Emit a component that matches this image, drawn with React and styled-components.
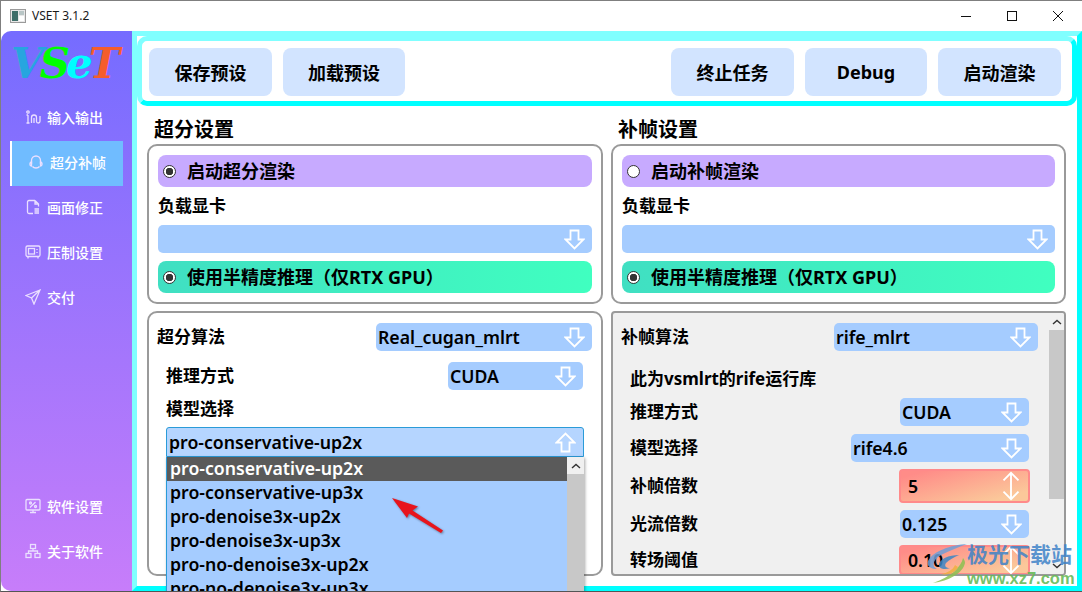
import React from "react";
import styled, { createGlobalStyle } from "styled-components";

const GlobalStyle = createGlobalStyle`
  html, body {
    margin: 0;
    height: 100%;
    overflow: hidden;
    background: #fff;
  }
  * {
    box-sizing: border-box;
  }
`;

const FONT = `"Noto Sans", "Noto Sans CJK SC", sans-serif`;

const ArrowDown = ({ up }) => (
  <ArrowSvg viewBox="0 0 21 21" $up={up}>
    <path d="M6.5 1.5H14.5V10.5H19.5L10.5 19.5L1.5 10.5H6.5Z" fill="none" stroke="#fff" strokeWidth="1.8" />
  </ArrowSvg>
);

const SpinArrows = () => (
  <SpinSvg viewBox="0 0 20 32">
    <path d="M10 2V30M2 10L10 2L18 10M2 22L10 30L18 22" fill="none" stroke="#fff" strokeWidth="2" />
  </SpinSvg>
);

const NavIcon = ({ name }) => {
  const s = { fill: "none", stroke: "#eadfff", strokeWidth: 1.3 };
  return (
    <NavSvg viewBox="0 0 16 16">
      {name === "io" && (
        <>
          <path d="M3 6V14M1.5 14H4.5M1.5 6H3" {...s} />
          <circle cx="3" cy="3" r="1.2" {...s} />
          <path d="M6.5 14V8.5C6.5 7 7.5 6 9 6C10.5 6 11.5 7 11.5 8.5V12.5C11.5 13.5 12.5 14 13.3 14C14.3 14 15 13.3 15 12.3V7M9 14V9" {...s} />
        </>
      )}
      {name === "sr" && (
        <>
          <path d="M3.5 10V6.5C3.5 4 5.5 2 8 2C10.5 2 12.5 4 12.5 6.5V10" {...s} />
          <path d="M2 9.5C2 8.5 2.7 8 3.5 8V12C2.7 12 2 11.5 2 10.5ZM14 9.5C14 8.5 13.3 8 12.5 8V12C13.3 12 14 11.5 14 10.5ZM4.5 12.5C6 14.5 10 14.5 11.5 12.5" {...s} />
        </>
      )}
      {name === "fix" && (
        <>
          <path d="M10 1.5H4C3 1.5 2.5 2 2.5 3V13C2.5 14 3 14.5 4 14.5H8M10 1.5L13.5 5V7.5M10 1.5V5H13.5" {...s} />
          <path d="M9.5 10H14M9.5 12H14M9.5 14H14" {...s} />
        </>
      )}
      {name === "enc" && (
        <>
          <rect x="1" y="2" width="14" height="10.5" rx="1.5" {...s} />
          <rect x="3.5" y="4.5" width="6" height="5.5" {...s} />
          <path d="M12 5V6M12 8V9M3 12.5V14.5M13 12.5V14.5" {...s} />
        </>
      )}
      {name === "send" && <path d="M15 1L1 6.5L6.5 9L9 15ZM15 1L6.5 9" {...s} />}
      {name === "cfg" && (
        <>
          <rect x="1" y="1.5" width="14" height="10.5" rx="1" {...s} />
          <path d="M5 14.5H11M8 12V14.5M5 9.5L10.5 4" {...s} />
          <circle cx="5.5" cy="5" r="1" {...s} />
          <circle cx="10.5" cy="8.5" r="1" {...s} />
        </>
      )}
      {name === "about" && (
        <>
          <rect x="5.5" y="1.5" width="5" height="4" {...s} />
          <rect x="1" y="10.5" width="5" height="4" {...s} />
          <rect x="10" y="10.5" width="5" height="4" {...s} />
          <path d="M8 5.5V8M3.5 10.5V8H12.5V10.5" {...s} />
        </>
      )}
    </NavSvg>
  );
};

const Radio = ({ checked }) => <RadioDot $checked={checked} />;

const Select = ({ width, value }) => (
  <SelectBox $width={width}>
    <SelectText>{value}</SelectText>
    <ArrowDown />
  </SelectBox>
);

const models = [
  "pro-conservative-up2x",
  "pro-conservative-up3x",
  "pro-denoise3x-up2x",
  "pro-denoise3x-up3x",
  "pro-no-denoise3x-up2x",
  "pro-no-denoise3x-up3x",
];

const navTop = [
  ["io", "输入输出"],
  ["sr", "超分补帧", true],
  ["fix", "画面修正"],
  ["enc", "压制设置"],
  ["send", "交付"],
];

const SettingsGroup = ({ enableText, enabled }) => (
  <Group>
    <Bar $color="#c7aaff">
      <Radio checked={enabled} />
      <BarText>{enableText}</BarText>
    </Bar>
    <GpuLabel>负载显卡</GpuLabel>
    <GpuSelect>
      <ArrowDown />
    </GpuSelect>
    <Bar $color="linear-gradient(90deg, #40dfc2, #40ffc0)">
      <Radio checked />
      <BarText>使用半精度推理（仅RTX GPU）</BarText>
    </Bar>
  </Group>
);

export default function App() {
  return (
    <Window>
      <GlobalStyle />
      <TitleBar>
        <AppIcon viewBox="0 0 16 14">
          <rect x="0.5" y="0.5" width="15" height="13" fill="#e8e8e8" stroke="#9a9a9a" />
          <rect x="2" y="2" width="6" height="10" fill="#3f6f6a" />
          <rect x="9" y="2" width="5" height="4" fill="#b9c6c6" />
          <rect x="9" y="7" width="5" height="5" fill="#fff" />
        </AppIcon>
        <WindowTitle>VSET 3.1.2</WindowTitle>
        <WindowControls>
          <ControlButton>
            <svg width="12" height="12" viewBox="0 0 12 12">
              <path d="M1 6.5H11" stroke="#111" strokeWidth="1" />
            </svg>
          </ControlButton>
          <ControlButton>
            <svg width="12" height="12" viewBox="0 0 12 12">
              <rect x="1.5" y="1.5" width="9" height="9" fill="none" stroke="#111" />
            </svg>
          </ControlButton>
          <ControlButton>
            <svg width="12" height="12" viewBox="0 0 12 12">
              <path d="M1 1L11 11M11 1L1 11" stroke="#111" strokeWidth="1" />
            </svg>
          </ControlButton>
        </WindowControls>
      </TitleBar>

      <Body>
        <Sidebar>
          <Logo>
            <LogoLetter $color="#27a5df">V</LogoLetter>
            <LogoLetter $color="#00ff00">S</LogoLetter>
            <LogoLetter $color="#00ffff">e</LogoLetter>
            <LogoLetter $color="#f55d2b">T</LogoLetter>
          </Logo>
          {navTop.map(([icon, label, active]) => (
            <NavItem key={label} $active={active}>
              <NavIcon name={icon} />
              {label}
            </NavItem>
          ))}
          <NavSpacer />
          <NavItem>
            <NavIcon name="cfg" />
            软件设置
          </NavItem>
          <NavItem>
            <NavIcon name="about" />
            关于软件
          </NavItem>
        </Sidebar>

        <Main>
          <Toolbar>
            <ToolButton>保存预设</ToolButton>
            <ToolButton $narrow>加载预设</ToolButton>
            <ToolSpacer />
            <ToolButton>终止任务</ToolButton>
            <ToolButton $narrow>Debug</ToolButton>
            <ToolButton>启动渲染</ToolButton>
          </Toolbar>

          <Columns>
            <Column>
              <SectionTitle>超分设置</SectionTitle>
              <SettingsGroup enableText="启动超分渲染" enabled />
              <LowerPanel>
                <Row $top={10}>
                  <FieldLabel>超分算法</FieldLabel>
                  <Select width={216} value="Real_cugan_mlrt" />
                </Row>
                <Row $top={11} $indent>
                  <FieldLabel>推理方式</FieldLabel>
                  <Select width={135} value="CUDA" />
                </Row>
                <Row $top={7} $indent>
                  <FieldLabel>模型选择</FieldLabel>
                </Row>
                <OpenSelect>
                  <OpenField>
                    <SelectText>pro-conservative-up2x</SelectText>
                    <ArrowDown up />
                  </OpenField>
                  <DropList>
                    {models.map((m, i) => (
                      <DropItem key={m} $selected={i === 0}>
                        {m}
                      </DropItem>
                    ))}
                    <DropScroll>
                      <ScrollButton>
                        <svg width="10" height="6" viewBox="0 0 10 6">
                          <path d="M1 5L5 1.5L9 5" fill="none" stroke="#333" strokeWidth="1.4" />
                        </svg>
                      </ScrollButton>
                    </DropScroll>
                    <RedArrow viewBox="0 0 60 44">
                      <path d="M2 2L28 10.5L22.5 14.5L53 34.5L51 37L19 17.5L17 22Z" fill="#e8141c" />
                    </RedArrow>
                  </DropList>
                </OpenSelect>
              </LowerPanel>
            </Column>

            <Column>
              <SectionTitle>补帧设置</SectionTitle>
              <SettingsGroup enableText="启动补帧渲染" />
              <ScrollPanel>
                <ScrollContent>
                  <Row $top={10}>
                    <FieldLabel>补帧算法</FieldLabel>
                    <Select width={204} value="rife_mlrt" />
                  </Row>
                  <Row $top={16} $indent>
                    <FieldLabel>此为vsmlrt的rife运行库</FieldLabel>
                  </Row>
                  <Row $top={7} $indent>
                    <FieldLabel>推理方式</FieldLabel>
                    <Select width={129} value="CUDA" />
                  </Row>
                  <Row $top={8} $indent>
                    <FieldLabel>模型选择</FieldLabel>
                    <Select width={178} value="rife4.6" />
                  </Row>
                  <Row $top={7} $indent>
                    <FieldLabel>补帧倍数</FieldLabel>
                    <SpinBox>
                      5
                      <SpinArrows />
                    </SpinBox>
                  </Row>
                  <Row $top={7} $indent>
                    <FieldLabel>光流倍数</FieldLabel>
                    <Select width={129} value="0.125" />
                  </Row>
                  <Row $top={7} $indent>
                    <FieldLabel>转场阈值</FieldLabel>
                    <SpinBox $short>
                      0.10
                      <SpinArrows />
                    </SpinBox>
                  </Row>
                </ScrollContent>
                <PanelScroll>
                  <ScrollEnd>
                    <svg width="10" height="6" viewBox="0 0 10 6">
                      <path d="M1 5L5 1.5L9 5" fill="none" stroke="#333" strokeWidth="1.4" />
                    </svg>
                  </ScrollEnd>
                  <ScrollThumb />
                  <ScrollEnd>
                    <svg width="10" height="6" viewBox="0 0 10 6">
                      <path d="M1 1L5 4.5L9 1" fill="none" stroke="#333" strokeWidth="1.4" />
                    </svg>
                  </ScrollEnd>
                </PanelScroll>
              </ScrollPanel>
            </Column>
          </Columns>
        </Main>
      </Body>

      <Watermark>
        <WatermarkLogo viewBox="0 0 44 44">
          <path d="M42 3C26 4 8 10 3 20C1 25 6 28 12 28C6 25 8 18 18 13C26 9 34 6 42 3Z" fill="#6f9fd8" />
          <path d="M34 14C24 14 14 18 14 24C14 28 20 29 25 27C21 27 19 25 21 22C24 19 29 16 34 14Z" fill="#3d86c6" />
          <path d="M38 17C36 26 26 36 8 42C24 40 38 32 40 22C40 20 39 18 38 17Z" fill="#8cc152" />
          <path d="M30 24C28 29 22 32 16 33C24 35 32 30 33 26Z" fill="#f0b040" />
        </WatermarkLogo>
        <WatermarkText>
          <WatermarkName>极光下载站</WatermarkName>
          <WatermarkUrl>www.xz7.com</WatermarkUrl>
        </WatermarkText>
      </Watermark>
    </Window>
  );
}

const Window = styled.div`
  position: relative;
  width: 1082px;
  height: 592px;
  display: flex;
  flex-direction: column;
  overflow: hidden;
  background: #fff;
  border-top: 1px solid #7f7f7f;
  border-left: 1px solid #7f7f7f;
  border-bottom: 1px solid #555;
  font-family: ${FONT};
  color: #000;
`;

const TitleBar = styled.div`
  height: 30px;
  flex: none;
  display: flex;
  align-items: center;
  padding: 0 1px 1px 9px;
  background: #fff;
`;

const AppIcon = styled.svg`
  width: 16px;
  height: 14px;
`;

const WindowTitle = styled.span`
  margin-left: 6px;
  font-size: 12px;
  color: #1a1a1a;
`;

const WindowControls = styled.div`
  margin-left: auto;
  display: flex;
`;

const ControlButton = styled.div`
  width: 46px;
  height: 30px;
  display: flex;
  align-items: center;
  justify-content: center;
`;

const Body = styled.div`
  flex: 1;
  min-height: 0;
  display: flex;
`;

const Sidebar = styled.nav`
  width: 131px;
  flex: none;
  display: flex;
  flex-direction: column;
  padding-bottom: 16px;
  background: linear-gradient(180deg, #756cff 0%, #c77dfa 100%);
  border-radius: 10px 0 0 10px;
`;

const Logo = styled.div`
  height: 65px;
  display: flex;
  align-items: center;
  justify-content: center;
  padding-right: 6px;
  font-family: "DejaVu Serif", serif;
  font-weight: 700;
  font-style: italic;
  font-size: 42px;
  letter-spacing: -4px;
`;

const LogoLetter = styled.span`
  color: ${(p) => p.$color};
`;

const NavItem = styled.div`
  width: 113px;
  height: 45px;
  margin-left: 9px;
  display: flex;
  align-items: center;
  gap: 6px;
  padding-left: ${(p) => (p.$active ? "16px" : "13px")};
  padding-bottom: 3px;
  border-left: 2px solid ${(p) => (p.$active ? "#fff" : "transparent")};
  background: ${(p) => (p.$active ? "#70bcff" : "transparent")};
  color: #fff;
  font-size: 14px;
  font-weight: 500;
`;

const NavSvg = styled.svg`
  width: 16px;
  height: 16px;
  flex: none;
`;

const NavSpacer = styled.div`
  flex: 1;
`;

const Main = styled.main`
  flex: 1;
  min-width: 0;
  min-height: 0;
  display: flex;
  flex-direction: column;
  background: #fff;
  border: 5px solid;
  border-color: #80ffff #00ffff #00ffff #80ffff;
`;

const Toolbar = styled.div`
  height: 70px;
  flex: none;
  display: flex;
  align-items: center;
  gap: 11px;
  padding: 2px 11px 0 7px;
  background: #fff;
  border: 5px solid;
  border-color: #80ffff #00ffff #00ffff #80ffff;
  border-radius: 10px;
`;

const ToolSpacer = styled.div`
  flex: 1;
`;

const ToolButton = styled.div`
  width: ${(p) => (p.$narrow ? "122px" : "123px")};
  height: 48px;
  display: flex;
  align-items: center;
  justify-content: center;
  background: #d2e4ff;
  border-radius: 8px;
  font-size: 18px;
  font-weight: 700;
`;

const Columns = styled.div`
  flex: 1;
  min-height: 0;
  display: grid;
  grid-template-columns: 456px 455px;
  grid-template-rows: minmax(0, 1fr);
  gap: 8px;
  padding: 0 11px 10px 10px;
`;

const Column = styled.section`
  min-width: 0;
  min-height: 0;
  display: flex;
  flex-direction: column;
`;

const SectionTitle = styled.h2`
  margin: 11px 0 1px 7px;
  height: 26px;
  line-height: 26px;
  font-size: 20px;
  font-weight: 700;
`;

const Group = styled.div`
  height: 160px;
  flex: none;
  padding: 9px;
  border: 2px solid #9a9a9a;
  border-radius: 10px;
  background: #fff;
`;

const Bar = styled.div`
  height: 32px;
  display: flex;
  align-items: center;
  gap: 11px;
  padding-left: 5px;
  background: ${(p) => p.$color};
  border-radius: 8px;
`;

const BarText = styled.span`
  position: relative;
  top: -1px;
  font-size: 18px;
  font-weight: 700;
`;

const RadioDot = styled.span`
  width: 13px;
  height: 13px;
  flex: none;
  border: 1px solid #333;
  border-radius: 50%;
  background: ${(p) =>
    p.$checked ? "radial-gradient(circle, #333 0 3.5px, #fff 4px)" : "#fff"};
`;

const GpuLabel = styled.div`
  height: 38px;
  line-height: 37px;
  font-size: 17px;
  font-weight: 700;
`;

const GpuSelect = styled.div`
  height: 28px;
  margin-bottom: 8px;
  display: flex;
  align-items: center;
  justify-content: flex-end;
  padding-right: 7px;
  background: #a5ccff;
  border-radius: 5px;
`;

const LowerPanel = styled.div`
  position: relative;
  margin-top: 7px;
  flex: 1;
  min-height: 0;
  border: 2px solid #9a9a9a;
  border-radius: 10px;
  background: #fff;
  padding: 0 9px 0 8px;
`;

const ScrollPanel = styled.div`
  margin-top: 7px;
  flex: 1;
  min-height: 0;
  display: flex;
  overflow: hidden;
  border: 2px solid #9a9a9a;
  border-radius: 4px;
  background: #f0f0f0;
`;

const ScrollContent = styled.div`
  flex: 1;
  min-width: 0;
  padding: 0 11px 0 8px;
`;

const Row = styled.div`
  height: ${(p) => (p.$indent ? "auto" : "28px")};
  min-height: 24px;
  margin-top: ${(p) => p.$top}px;
  margin-left: ${(p) => (p.$indent ? "9px" : "0")};
  margin-right: ${(p) => (p.$indent ? "9px" : "0")};
  display: flex;
  align-items: center;
  justify-content: space-between;
`;

const FieldLabel = styled.span`
  line-height: 24px;
  font-size: 17px;
  font-weight: 700;
`;

const SelectBox = styled.div`
  width: ${(p) => p.$width}px;
  height: 28px;
  flex: none;
  display: flex;
  align-items: center;
  justify-content: space-between;
  padding: 0 7px 0 2px;
  background: #a5ccff;
  border-radius: 5px;
`;

const SelectText = styled.span`
  font-size: 17.7px;
  line-height: 24px;
  font-weight: 600;
`;

const ArrowSvg = styled.svg`
  width: 21px;
  height: 21px;
  flex: none;
  transform: ${(p) => (p.$up ? "rotate(180deg)" : "none")};
`;

const SpinSvg = styled.svg`
  width: 20px;
  height: 30px;
  flex: none;
`;

const SpinBox = styled.div`
  width: 131px;
  height: ${(p) => (p.$short ? "30px" : "34px")};
  margin-right: -1px;
  flex: none;
  display: flex;
  align-items: center;
  justify-content: space-between;
  padding: 0 7px;
  border: 2px solid #ff8a8a;
  border-radius: 4px;
  background: linear-gradient(165deg, #ff8c88 10%, #fbc89a 85%);
  font-size: 17.7px;
  line-height: 24px;
  font-weight: 600;
`;

const OpenSelect = styled.div`
  position: relative;
  margin: 6px 8px 0 9px;
`;

const OpenField = styled.div`
  height: 30px;
  display: flex;
  align-items: center;
  justify-content: space-between;
  padding: 0 7px 0 2px;
  background: #b5d5ff;
  border: 1px solid #2a9bd8;
  border-radius: 3px 3px 0 0;
`;

const DropList = styled.div`
  position: absolute;
  top: 100%;
  left: 0;
  right: 0;
  height: 140px;
  overflow: hidden;
  padding-right: 17px;
  background: #a5ccff;
  border-left: 1px solid #2a9bd8;
  box-shadow: 1px 1px 3px rgba(0, 0, 0, 0.35);
`;

const DropItem = styled.div`
  height: 24px;
  line-height: 23px;
  padding-left: 3px;
  font-size: 17.7px;
  font-weight: 600;
  background: ${(p) => (p.$selected ? "#5a5a5a" : "transparent")};
  color: ${(p) => (p.$selected ? "#fff" : "#000")};
`;

const DropScroll = styled.div`
  position: absolute;
  top: 0;
  right: 0;
  bottom: 0;
  width: 17px;
  background: #c8c8c8;
`;

const ScrollButton = styled.div`
  height: 17px;
  display: flex;
  align-items: center;
  justify-content: center;
  background: #f0f0f0;
`;

const RedArrow = styled.svg`
  position: absolute;
  left: 223px;
  top: 39px;
  width: 60px;
  height: 44px;
  filter: drop-shadow(1px 1px 1px rgba(0, 0, 0, 0.4));
`;

const PanelScroll = styled.div`
  width: 15px;
  flex: none;
  display: flex;
  flex-direction: column;
  background: #f0f0f0;
`;

const ScrollEnd = styled.div`
  height: 17px;
  flex: none;
  display: flex;
  align-items: center;
  justify-content: center;
  &:last-child {
    margin-top: auto;
  }
`;

const ScrollThumb = styled.div`
  height: 169px;
  background: #c8c8c8;
`;

const Watermark = styled.div`
  position: absolute;
  left: 924px;
  top: 540px;
  display: flex;
  align-items: flex-start;
  pointer-events: none;
`;

const WatermarkLogo = styled.svg`
  width: 44px;
  height: 44px;
  flex: none;
  opacity: 0.85;
`;

const WatermarkText = styled.div`
  display: flex;
  flex-direction: column;
  margin-left: -2px;
`;

const WatermarkName = styled.span`
  font-size: 21px;
  line-height: 26px;
  font-weight: 700;
  color: rgba(62, 130, 200, 0.85);
`;

const WatermarkUrl = styled.span`
  font-family: "Liberation Sans", sans-serif;
  font-size: 16.5px;
  line-height: 22px;
  font-weight: 700;
  color: rgba(100, 185, 85, 0.9);
`;
